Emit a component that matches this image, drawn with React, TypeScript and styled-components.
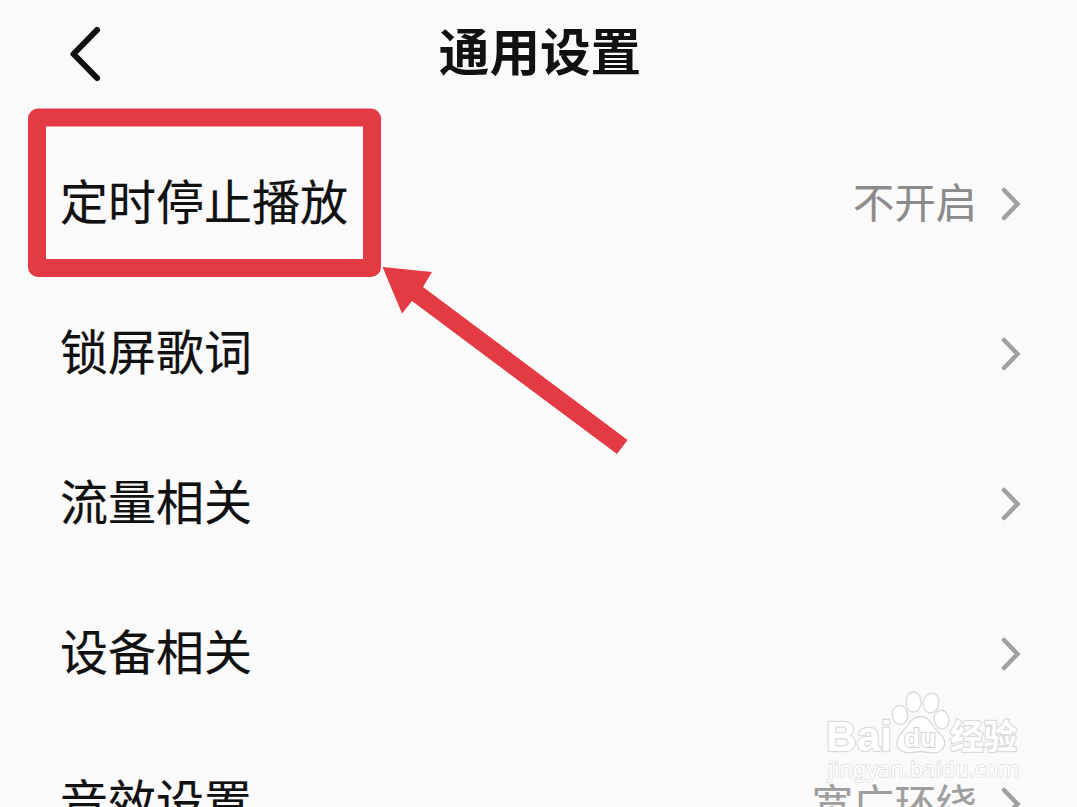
import React from "react";
import styled, { createGlobalStyle } from "styled-components";

const GlobalStyle = createGlobalStyle`
  * { box-sizing: border-box; }
  body {
    margin: 0;
    background: #fafafa;
    overflow: hidden;
    font-family: "Noto Sans CJK SC", sans-serif;
    color: #111;
  }
`;

const Screen = styled.main`
  position: relative;
  width: 1077px;
  height: 807px;
  overflow: hidden;
  background: #fafafa;
`;

const Header = styled.header`
  display: grid;
  grid-template-columns: 200px 1fr 200px;
  align-items: center;
  height: 108px;
  margin-bottom: 20px;
`;

const BackButton = styled.button`
  display: flex;
  padding: 0 0 0 68px;
  border: 0;
  background: none;
  color: #111;
`;

const Title = styled.h1`
  margin: 0;
  padding: 0 0 10px 3px;
  font-size: 50.6px;
  line-height: 72px;
  font-weight: 700;
  text-align: center;
  white-space: nowrap;
`;

const Row = styled.div`
  display: flex;
  align-items: center;
  height: 150px;
  padding: 0 55px 0 60px;
`;

const Label = styled.span`
  flex: 1;
  padding-bottom: 9px;
  font-size: 48px;
  line-height: 70px;
  white-space: nowrap;
  -webkit-text-stroke: 0.2px #111;
`;

const Value = styled.span<{ $faded?: boolean }>`
  margin-right: 23px;
  padding-bottom: ${(p) => (p.$faded ? 5 : 7)}px;
  font-size: 41.3px;
  line-height: 60px;
  color: ${(p) => (p.$faded ? "#9e9e9e" : "#8b8b8b")};
  white-space: nowrap;
  -webkit-text-stroke: 0.2px currentColor;
`;

const Overlay = styled.svg`
  position: absolute;
  top: 0;
  left: 0;
  pointer-events: none;
`;

const Chevron = () => (
  <svg width="22" height="36" viewBox="0 0 22 36" fill="none">
    <path d="M4 5 L17.500 19 L4 33" stroke="#a0a0a0" strokeWidth="4.500" strokeLinecap="round" />
  </svg>
);

const rows: { label: string; value?: string; faded?: boolean }[] = [
  { label: "定时停止播放", value: "不开启" },
  { label: "锁屏歌词" },
  { label: "流量相关" },
  { label: "设备相关" },
  { label: "音效设置", value: "宽广环绕", faded: true },
];

const Annotation = () => (
  <Overlay width="1077" height="807" viewBox="0 0 1077 807">
    <rect x="37" y="117.5" width="335" height="150.5" rx="1" fill="none" stroke="#e33a44" strokeWidth="18" strokeLinejoin="round" />
    <path d="M382.5 267 L432 272 L423 287 L627.5 440 L617 454 L412 301 L402 313.5 Z" fill="#e33a44" />
  </Overlay>
);

const Watermark = () => (
  <Overlay width="1077" height="807" viewBox="0 0 1077 807">
    <g fill="#fff" stroke="#dadada" strokeWidth="2.4" paintOrder="stroke" strokeLinejoin="round">
      <text x="826" y="751" fontFamily="Liberation Sans" fontWeight="700" fontSize="43" textLength="66" lengthAdjust="spacingAndGlyphs">Bai</text>
      <text x="950" y="749" fontFamily="Noto Sans CJK SC" fontWeight="700" fontSize="34" textLength="67" lengthAdjust="spacingAndGlyphs">经验</text>
      <text x="828" y="777" fontFamily="Noto Sans, sans-serif" fontSize="22" stroke="#e0e0e0" strokeWidth="1.6" textLength="191" lengthAdjust="spacingAndGlyphs">jingyan.baidu.com</text>
    </g>
    <g fill="#fff" stroke="#d9d9d9" strokeWidth="1.3">
      <ellipse cx="900" cy="715" rx="7.8" ry="9.6" transform="rotate(-10 900 715)" />
      <ellipse cx="913.5" cy="702" rx="7.5" ry="10" />
      <ellipse cx="931" cy="703" rx="7.8" ry="10" transform="rotate(12 931 703)" />
      <ellipse cx="941.5" cy="719.5" rx="7.4" ry="9.4" transform="rotate(-12 941.5 719.5)" />
      <path d="M920 716.500 C927 716.500 930 721 933 726 C937 732 944 735 944.500 742 C945 749 940 753 933 753 C928 753 925 751.500 920 751.500 C915 751.500 912 753 907 752.500 C900 752 896.500 748 897 742 C897.500 735 904 731 908 725 C911 720 914 716.500 920 716.500 Z" />
      <text x="904" y="747" fontFamily="Liberation Sans" fontWeight="700" fontSize="26" textLength="32" lengthAdjust="spacingAndGlyphs" stroke="#cfcfcf" strokeWidth="2" paintOrder="stroke">du</text>
    </g>
  </Overlay>
);

export default function App() {
  return (
    <>
      <GlobalStyle />
      <Screen>
        <Header>
          <BackButton aria-label="返回">
            <svg width="36" height="60" viewBox="0 0 36 60" fill="none">
              <path d="M29 6 L5.500 30 L29 54" stroke="currentColor" strokeWidth="6" strokeLinecap="round" strokeLinejoin="round" />
            </svg>
          </BackButton>
          <Title>通用设置</Title>
        </Header>
        {rows.map((row) => (
          <Row key={row.label}>
            <Label>{row.label}</Label>
            {row.value && <Value $faded={row.faded}>{row.value}</Value>}
            <Chevron />
          </Row>
        ))}
        <Annotation />
        <Watermark />
      </Screen>
    </>
  );
}
